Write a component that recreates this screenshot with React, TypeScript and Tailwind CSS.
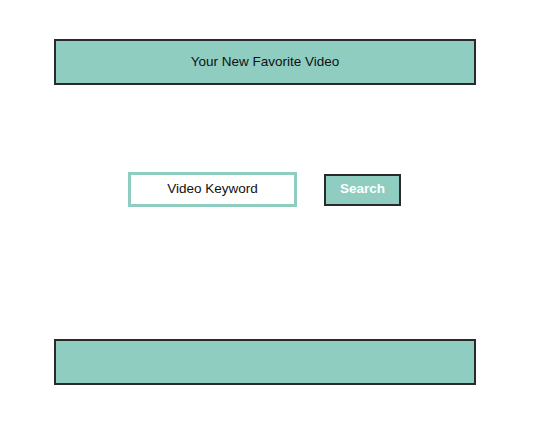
import React from "react";

const App: React.FC = () => {
  return (
    <div className="w-[538px] h-[432px] bg-white pt-[39px] pl-[54px] font-['Liberation_Sans',Arial,sans-serif]">
      <div className="w-[422px] h-[46px] bg-[#8ecdc0] border-2 border-[#2a2a2a] flex items-center justify-center text-[13.5px] text-[#111]">
        Your New Favorite Video
      </div>

      <div className="flex items-center mt-[87px] ml-[74px] h-[35px]">
        <div className="w-[169px] h-[35px] border-[3px] border-[#8ecdc0] bg-white flex items-center justify-center text-[13.5px] text-[#111]">
          Video Keyword
        </div>
        <button className="ml-[27px] w-[77px] h-[32px] bg-[#8ecdc0] border-2 border-[#2a2a2a] text-white font-bold text-[13.5px]">
          Search
        </button>
      </div>

      <div className="mt-[132px] w-[422px] h-[46px] bg-[#8ecdc0] border-2 border-[#2a2a2a]" />
    </div>
  );
};

export default App;
